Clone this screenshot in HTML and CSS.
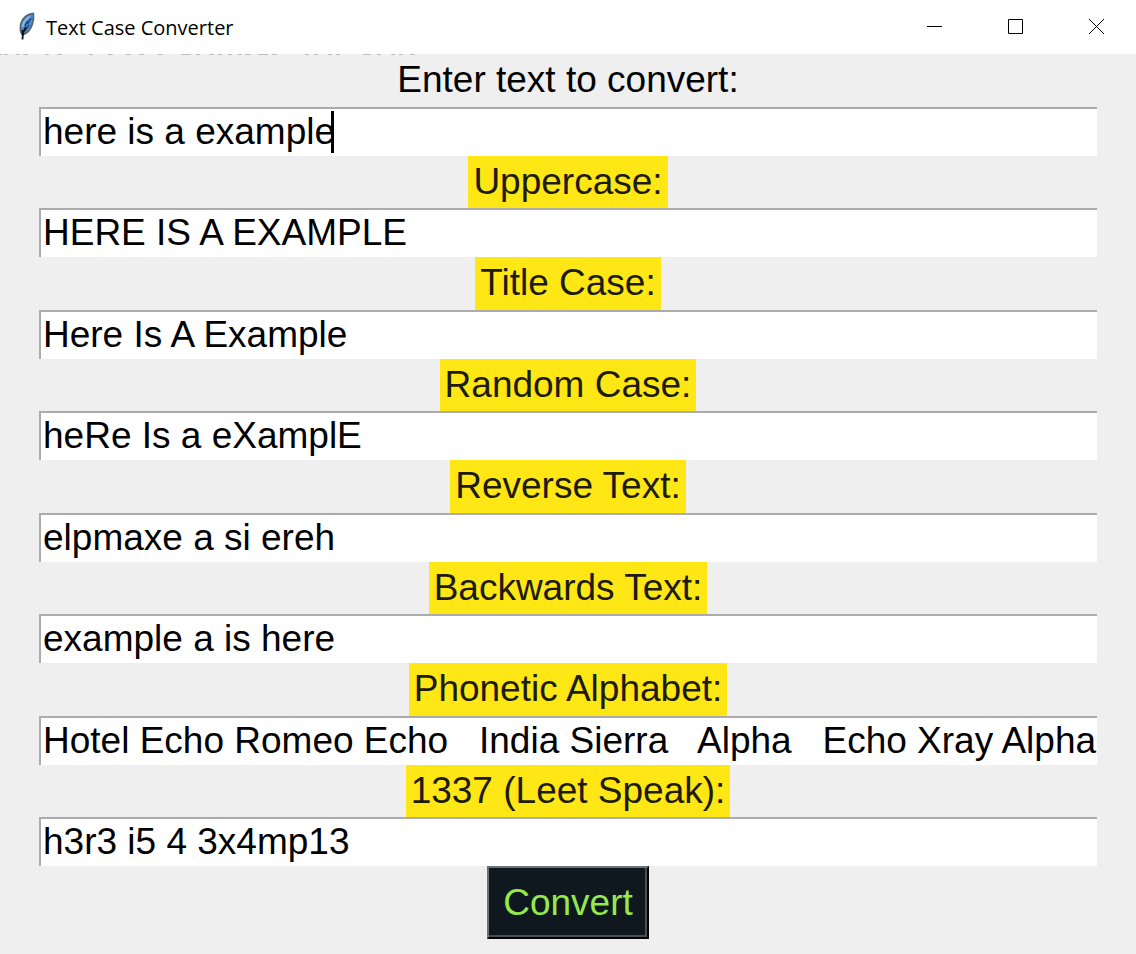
FILE: index.html
```html
<!DOCTYPE html>
<html lang="en">
<head>
<meta charset="utf-8">
<title>Text Case Converter</title>
<link rel="stylesheet" href="styles.css">
</head>
<body>
<header class="titlebar">
  <svg class="feather" width="20" height="30" viewBox="0 0 20 30" aria-hidden="true">
    <path d="M17.500 1.500C12 1 6.500 6 5 11c-1.500 5-1.500 8 1.500 12 5-1.500 8.500-6 10-11 1-3.500 1.500-7 1-10.500z" fill="#4a86cc" stroke="#5b626a" stroke-width="1.500"/>
    <path d="M14 4.500C10 7 7 11 6.500 15" fill="none" stroke="#86b9ec" stroke-width="2"/>
    <path d="M15 6l-3.500 6M11.500 9L9 14M13 13l-4 6" fill="none" stroke="#1d3f70" stroke-width="1.300"/>
    <path d="M10 15c-2 3-3.500 6-3.500 12.500M6.500 18v5" fill="none" stroke="#10151c" stroke-width="1.800"/>
  </svg>
  <h1 class="title">Text Case Converter</h1>
  <div class="controls">
    <button class="control" type="button" aria-label="Minimize"><svg width="15" height="15" viewBox="0 0 15 15"><path d="M0 7.500h15"/></svg></button>
    <button class="control" type="button" aria-label="Maximize"><svg width="15" height="15" viewBox="0 0 15 15"><path d="M.5.5h14v14H.5z"/></svg></button>
    <button class="control" type="button" aria-label="Close"><svg width="15" height="15" viewBox="0 0 15 15"><path d="M0 0l15 15M15 0L0 15"/></svg></button>
  </div>
  <svg class="edge" width="420" height="1" viewBox="0 0 420 1" aria-hidden="true">
    <path d="M0 .5h2M4 .5h4M16 .5h4M23 .5h5M45 .5h4M57 .5h5M89 .5h4M108 .5h5M126 .5h5M139 .5h5M158 .5h5M181 .5h10M196 .5h4M209 .5h5M218 .5h4M228 .5h4M238 .5h4M245 .5h6M258 .5h10M272 .5h5M305 .5h4M314 .5h4M328 .5h4M336 .5h4M363 .5h8M377 .5h4M391 .5h4M399 .5h4M410 .5h5"/>
  </svg>
</header>
<form class="form">
  <div class="row">
    <label class="label plain" for="source">Enter text to convert:</label>
    <div class="entry"><input class="field" id="source" type="text" value="here is a example"><span class="caret"></span></div>
  </div>
  <div class="row">
    <label class="label" for="upper">Uppercase:</label>
    <div class="entry"><input class="field" id="upper" type="text" value="HERE IS A EXAMPLE"></div>
  </div>
  <div class="row">
    <label class="label" for="titlecase">Title Case:</label>
    <div class="entry"><input class="field" id="titlecase" type="text" value="Here Is A Example"></div>
  </div>
  <div class="row">
    <label class="label" for="random">Random Case:</label>
    <div class="entry"><input class="field" id="random" type="text" value="heRe Is a eXamplE"></div>
  </div>
  <div class="row">
    <label class="label" for="reverse">Reverse Text:</label>
    <div class="entry"><input class="field" id="reverse" type="text" value="elpmaxe a si ereh"></div>
  </div>
  <div class="row">
    <label class="label" for="backwards">Backwards Text:</label>
    <div class="entry"><input class="field" id="backwards" type="text" value="example a is here"></div>
  </div>
  <div class="row">
    <label class="label" for="phonetic">Phonetic Alphabet:</label>
    <div class="entry"><input class="field" id="phonetic" type="text" value="Hotel Echo Romeo Echo   India Sierra   Alpha   Echo Xray Alpha"></div>
  </div>
  <div class="row">
    <label class="label" for="leet">1337 (Leet Speak):</label>
    <div class="entry"><input class="field" id="leet" type="text" value="h3r3 i5 4 3x4mp13"></div>
  </div>
  <button class="convert" type="button">Convert</button>
</form>
</body>
</html>
```
FILE: styles.css
```css
* {
  box-sizing: border-box;
}

body {
  margin: 0;
  min-height: 100vh;
  display: flex;
  flex-direction: column;
  background: #efefef;
  color: #000;
  font-family: "Liberation Sans", Arial, sans-serif;
}

.titlebar {
  position: relative;
  display: flex;
  align-items: center;
  height: 54px;
  padding-left: 16px;
  background: #fff;
}

.feather {
  margin-right: 10px;
}

.title {
  flex: 1;
  margin: 0;
  padding-top: 2px;
  font: 400 20px/28px "Open Sans", "Noto Sans", sans-serif;
}

.controls {
  display: flex;
  align-self: stretch;
}

.control {
  display: grid;
  place-items: center;
  width: 81px;
  padding: 0 0 1px 2px;
  border: 0;
  background: none;
}

.control path {
  fill: none;
  stroke: #000;
}

.edge {
  position: absolute;
  left: 0;
  top: 100%;
}

.edge path {
  stroke: #bdbdbd;
}

.form {
  flex: 1;
  display: flex;
  flex-direction: column;
  align-items: center;
  padding: 0 39px 15px;
}

.row {
  flex: 1 0 auto;
  align-self: stretch;
  display: flex;
  flex-direction: column;
  align-items: center;
}

.label {
  flex: 1 0 auto;
  padding: 0 5px;
  background: #ffe615;
  color: #1c1c08;
  font-size: 37px;
  line-height: 52px;
}

.plain {
  background: none;
  color: #000;
}

.entry {
  position: relative;
  display: flex;
  align-self: stretch;
}

.field {
  flex: 1;
  min-width: 0;
  height: 49px;
  padding: 0 0 1px 2px;
  border: 0 solid #ababab;
  border-width: 2px 0 0 2px;
  border-radius: 0;
  outline: 0;
  background: #fff;
  color: #000;
  font: 37px "Liberation Sans", Arial, sans-serif;
}

.caret {
  position: absolute;
  left: 292px;
  top: 4px;
  width: 3px;
  height: 42px;
  background: #000;
}

.convert {
  height: 73px;
  padding: 0 14px;
  border: 2px solid;
  border-color: #6d7277 #000 #000 #6d7277;
  box-shadow: inset -2px -2px #484d52;
  border-radius: 0;
  background: #0f181f;
  color: #95e94b;
  font: 37px "Liberation Sans", Arial, sans-serif;
}
```
